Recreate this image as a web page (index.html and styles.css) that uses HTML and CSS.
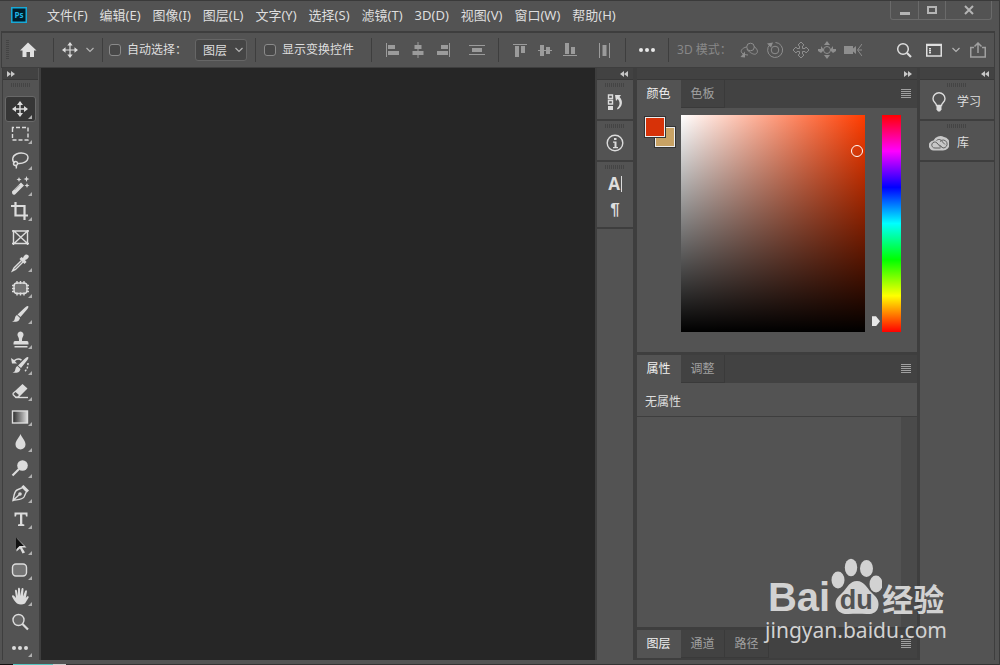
FILE: index.html
```html
<!DOCTYPE html>
<html lang="zh-CN">

<head>
    <meta charset="UTF-8">
    <meta name="viewport" content="width=device-width, initial-scale=1.0">
    <title>Photoshop</title>
    <link rel="stylesheet" href="styles.css">
</head>

<body>
    <div class="app">
        <header class="menubar">
            <svg class="logo" viewBox="0 0 16 16" role="img" aria-label="Ps">
                <rect x=".75" y=".75" width="14.5" height="14.5" fill="#001d2b" stroke="#17a9d8" stroke-width="1.5" />
                <text x="8" y="11" text-anchor="middle">Ps</text>
            </svg>
            <nav class="menus">
                <button>文件(F)</button>
                <button>编辑(E)</button>
                <button>图像(I)</button>
                <button>图层(L)</button>
                <button>文字(Y)</button>
                <button>选择(S)</button>
                <button>滤镜(T)</button>
                <button>3D(D)</button>
                <button>视图(V)</button>
                <button>窗口(W)</button>
                <button>帮助(H)</button>
            </nav>
            <div class="window-buttons">
                <button aria-label="最小化"><svg viewBox="0 0 12 12"><path d="M1 8h10v3H1z" fill="#b4b4b4" /></svg></button>
                <button aria-label="最大化"><svg viewBox="0 0 12 12"><path d="M2 3h8v6H2z" fill="none" stroke="#b4b4b4" stroke-width="2" /></svg></button>
                <button class="close" aria-label="关闭"><svg viewBox="0 0 12 12"><path d="M2 2l8 8M10 2L2 10" stroke="#b4b4b4" stroke-width="2" /></svg></button>
            </div>
        </header>

        <!-- Options bar -->
        <div class="options">
            <span class="grip-v"></span>
            <button class="home" aria-label="主页"><svg class="i18" viewBox="0 0 18 18"><path d="M9 1.500L1 9.500h2.500V16H7.500v-5h3.500v5h4V9.500H17.500z" fill="#e0e0e0" /></svg></button>
            <div class="group">
                <button aria-label="移动工具"><svg class="i16" viewBox="0 0 18 18"><path d="M9 2v14M2 9h14" stroke="#ddd" stroke-width="1.300" /><path d="M9 0l3 4H6zM9 18l3-4H6zM0 9l4-3v6zM18 9l-4-3v6z" fill="#ddd" /></svg></button>
                <svg class="chev" viewBox="0 0 8 8"><path d="M.5 2L4 5.500 7.500 2" /></svg>
            </div>
            <div class="group auto">
                <label class="check"><input type="checkbox">自动选择：</label>
                <span class="select">
                    <select aria-label="自动选择"><option>图层</option><option>组</option></select>
                    <svg class="chev" viewBox="0 0 8 8"><path d="M.5 2L4 5.500 7.500 2" /></svg>
                </span>
            </div>
            <div class="group transform">
                <label class="check"><input type="checkbox">显示变换控件</label>
            </div>
            <div class="group align">
                <button aria-label="左对齐"><svg class="i16" viewBox="0 0 16 16"><path d="M1 1h1v14H1zM3 3h7v4H3zM3 9h11v4H3z" /></svg></button>
                <button aria-label="水平居中对齐"><svg class="i16" viewBox="0 0 16 16"><path d="M7.500 0h1v16h-1zM4.500 3h7v4h-7zM2.500 9h11v4h-11z" /></svg></button>
                <button aria-label="右对齐"><svg class="i16" viewBox="0 0 16 16"><path d="M14 1h1v14h-1zM6 3h7v4H6zM2 9h11v4H2z" /></svg></button>
                <button class="distribute" aria-label="垂直分布"><svg class="i16" viewBox="0 0 16 16"><path d="M0 3h16v1H0zM0 12h16v1H0zM3 6h10v4H3z" /></svg></button>
            </div>
            <div class="group align">
                <button aria-label="顶对齐"><svg class="i16" viewBox="0 0 16 16"><path d="M1 2h14v1H1zM3 4h4v11H3zM9 4h4v7H9z" /></svg></button>
                <button aria-label="垂直居中对齐"><svg class="i16" viewBox="0 0 16 16"><path d="M1 8h14v1H1zM3 3h4v11H3zM9 5h4v7H9z" /></svg></button>
                <button aria-label="底对齐"><svg class="i16" viewBox="0 0 16 16"><path d="M1 13h14v1H1zM3 1h4v11H3zM9 5h4v7H9z" /></svg></button>
                <button class="distribute" aria-label="水平分布"><svg class="i16" viewBox="0 0 16 16"><path d="M3 1h1v15H3zM13 1h1v15h-1zM6.500 3h4v11h-4z" /></svg></button>
            </div>
            <div class="group more">
                <button aria-label="更多"><svg class="i18" viewBox="0 0 18 18"><g fill="#e8e8e8"><circle cx="3" cy="9" r="2" /><circle cx="9" cy="9" r="2" /><circle cx="15" cy="9" r="2" /></g></svg></button>
            </div>
            <div class="group mode">
                <span>3D 模式：</span>
                <button aria-label="旋转"><svg class="i18" viewBox="0 0 18 18"><circle cx="10.500" cy="6" r="3.800" /><path d="M6.500 6C2 7 0 10 2 12c1 1.200 3 1.800 6 2M14 5.500c3 2 4.500 5 2.500 7-1.500 1.500-4 .5-7-1.500L7 8.500" /><path class="solid" d="M5 10.500v6l-4.500-.5z" /></svg></button>
                <button aria-label="滚动"><svg class="i18" viewBox="0 0 18 18"><circle cx="9" cy="9" r="3.800" /><path d="M4 3.500A7.500 7.500 0 1 0 9.500 1.500" /><path class="solid" d="M1 2.500l6-1-2 5z" /></svg></button>
                <button aria-label="平移"><svg class="i18" viewBox="0 0 18 18"><path d="M9 1l3 3-1.500 1v2.500H13L14 6l3 3-3 3-1-1.500h-2.500V13l1.500 1-3 3-3-3 1.500-1v-2.500H5L4 12 1 9l3-3 1 1.500h2.500V5L6 4z" /></svg></button>
                <button aria-label="滑动"><svg class="i18" viewBox="0 0 18 18"><circle cx="9" cy="9" r="3.500" /><path class="solid" d="M9 0l3 4H6zM9 18l3-4H6zM0 8h3V5l3 4-3 3-3-2zM18 8h-3V5l-3 4 3 3 3-2z" /></svg></button>
                <button aria-label="缩放"><svg class="i18" viewBox="0 0 18 18"><path class="solid" d="M0 5h9v2.500l3-2.500v8L9 10.500V13H0z" /><path d="M18 3l-4.500 6 4.500 6M14 9h4" /></svg></button>
            </div>
            <div class="right-tools">
                <button class="search" aria-label="搜索"><svg class="i16" viewBox="0 0 16 16"><circle cx="7" cy="7" r="5.300" /><path d="M11 11l4 4" stroke-width="2.200" /></svg></button>
                <button aria-label="工作区"><svg class="i16" viewBox="0 0 16 16"><path d="M.75 2.500h14.500v11.500H.750z" /><path d="M1 3h14" stroke-width="2" /><path d="M4 6v6" stroke-width="2" stroke-dasharray="1.500 .5" /></svg></button>
                <svg class="chev" viewBox="0 0 8 8"><path d="M.5 2L4 5.500 7.500 2" /></svg>
                <button class="share" aria-label="共享"><svg class="i16" viewBox="0 0 16 16"><path d="M4 5.500H.750V15h14.500V5.500H12M8 11V1M4.500 4.500L8 1l3.500 3.500" /></svg></button>
            </div>
        </div>

        <div class="workspace">
            <aside class="toolbar">
                <button class="collapse left" aria-label="展开"><svg viewBox="0 0 8 6"><path d="M0 0l4 3-4 3zM4 0l4 3-4 3z" /></svg></button>
                <span class="grip"></span>
                <div class="tools">
                    <button class="active sub" aria-label="移动"><svg viewBox="0 0 20 20"><path class="l" d="M10 3v14M3 10h14" /><path d="M10 2l3 4H7zM10 18l3-4H7zM2 10l4-3v6zM18 10l-4-3v6z" /></svg></button>
                    <button class="sub" aria-label="矩形选框"><svg viewBox="0 0 20 20"><path class="l" stroke-dasharray="4 2" d="M2.500 6V3.500H18v12.500H2.500V5" /></svg></button>
                    <button class="sub" aria-label="套索"><svg viewBox="0 0 20 20"><path class="l" d="M5 13C1.500 11 2 6 6.500 4 11 2 18 3 18 7.500c0 4-5 6.500-10 6" /><circle class="l" cx="5.500" cy="13.500" r="2" /><path class="l" d="M5 15.500c1.500 0 2 1 1 3" /></svg></button>
                    <button class="sub" aria-label="魔棒"><svg viewBox="0 0 20 20"><path d="M2 15.500L11 6.500l3 3-9 9q-3 1-3-3zM9 1l.7 1.800L11.500 3.500 9.700 4.200 9 6l-.7-1.800L6.500 3.500l1.800-.7zM16.500 0l.8 2.200 2.200.8-2.200.8-.8 2.200-.8-2.200-2.200-.8 2.200-.8zM17 7l.7 1.800 1.800.7-1.800.7L17 12l-.7-1.800-1.800-.7 1.800-.7z" /><path d="M4.500 14l5-5" stroke="#999" /></svg></button>
                    <button class="sub" aria-label="裁剪"><svg viewBox="0 0 20 20"><path class="l w" d="M5.500 1v13.500H18M1 5h13.500v14" /></svg></button>
                    <button aria-label="图框"><svg viewBox="0 0 20 20"><path class="l" d="M2 4h17M2 16.500h17M3.500 3v15M17.500 3v15M4 4l13.500 12.500M17.500 4L4 16.500" /></svg></button>
                    <button class="sub" aria-label="吸管"><svg viewBox="0 0 20 20"><path d="M9.500 6L11.500 4l1.500 1c1-3 3-4.500 5-3s0 4-3 5l1.500 2-2 2z" /><path class="l" d="M11.500 7.500L4 15l-1.500 3 3-1.500L13 9" /></svg></button>
                    <button class="sub" aria-label="修补"><svg viewBox="0 0 20 20"><rect class="l" x="4" y="5" width="13" height="10.500" rx="3" fill="#747474" /><path class="l" d="M7 3v3M10.500 3v3M14 3v3M7 14.500v3M10.500 14.500v3M14 14.500v3M2 7.500h3M2 10.500h3M2 13.500h3M16 7.500h3M16 10.500h3M16 13.500h3" /></svg></button>
                    <button class="sub" aria-label="画笔"><svg viewBox="0 0 20 20"><path d="M18 2c1 .5 0 2-1 3.500L10.500 13 7.500 10.500 14.500 4Q17 1.500 18 2zM7 11l3 3c-1 4-4 4-8 3.800 2.500-1 2.500-2 3-4 .4-1.500 1-2.300 2-2.800z" /></svg></button>
                    <button class="sub" aria-label="仿制图章"><svg viewBox="0 0 20 20"><path d="M10.500 1.500a3.200 3.200 0 0 1 2.500 5c-1 1.500-1 3-1 4.500h5q1.500 0 1.500 2v1.500h-15V13q0-2 1.500-2h4c0-1.500 0-3-1-4.500a3.200 3.200 0 0 1 2.500-5zM4.500 16h13v1.500h-13z" /></svg></button>
                    <button class="sub" aria-label="历史记录画笔"><svg viewBox="0 0 20 20"><path d="M18 2c1 .5 0 2-1 3.500L11 13 8 10.500 14.500 4Q17 1.500 18 2zM7.500 11l3 3c-1 4-4 4-8 3.800 2.500-1 2.500-2 3-4 .4-1.500 1-2.300 2-2.800zM1 3l3 2q4-3 8-.5l-1 1.200q-3-2-6 .5L7 8.500H2z" /><path class="l" stroke-dasharray="2 1.500" d="M18 8c0 4-1 7-4 9" /></svg></button>
                    <button class="sub" aria-label="橡皮擦"><svg viewBox="0 0 20 20"><path d="M12.500 3l5 4.500-7 7-5-5zM2.500 12l3-2.500 5 5L8.500 17h-3l-3-3zM5.500 11l-2 2 2.500 2.500h1.500L9 14z" fill-rule="evenodd" /><path class="l" d="M5.500 16.500H18" /></svg></button>
                    <button class="sub" aria-label="渐变"><svg viewBox="0 0 20 20"><defs><linearGradient id="fade"><stop stop-color="#2a2a2a" /><stop offset="1" stop-color="#ddd" /></linearGradient></defs><rect class="l" x="2.500" y="4" width="15" height="12" fill="url(#fade)" /></svg></button>
                    <button class="sub" aria-label="模糊"><svg viewBox="0 0 20 20"><path d="M10.500 2c1.500 4 5 6.500 5 10.500a5 5 0 0 1-10 0C5.500 8.500 9 6 10.500 2z" /></svg></button>
                    <button class="sub" aria-label="减淡"><svg viewBox="0 0 20 20"><circle cx="12.500" cy="7.500" r="5.300" /><path class="l w" d="M9 11l-6.500 6.500" /></svg></button>
                    <button class="sub" aria-label="钢笔"><svg viewBox="0 0 20 20"><path class="l" d="M3 17.500C4 13 4 8.500 7 7l5.500-2.500 4 4L14 14c-1.500 2.500-6 2.500-11 3.500zM3 17.500l6.500-6" /><circle cx="10" cy="11" r="1.800" /><path d="M11.500 3.500L13.500 2 19 7.500l-2 2z" /></svg></button>
                    <button class="sub" aria-label="横排文字"><svg viewBox="0 0 20 20"><path d="M4.500 3.500h13v4H16l-.5-2h-3.200v9.500l2 .5v1.500H8V15.500l2-.5V5.500H6.500L6 7.500H4.500z" /></svg></button>
                    <button class="sub" aria-label="路径选择"><svg viewBox="0 0 20 20"><path d="M6.500 3l10 9.500h-4.500l3 5-2.500 1-2.500-5-3.500 3z" /><path d="M6 2.500l8 8.500H9.500L6 14.500z" fill="#111" /></svg></button>
                    <button class="sub" aria-label="圆角矩形"><svg viewBox="0 0 20 20"><rect class="l" x="2.500" y="4" width="14" height="12" rx="3.500" fill="#747474" /></svg></button>
                    <button class="sub" aria-label="抓手"><svg viewBox="0 0 20 20"><path d="M7 17.500C5 15.500 3 13 2 10.500c0-1.500 1.500-1.500 2.500-.2L6 12 5 5c0-1.700 1.700-1.700 2 0l1 5V3c0-1.600 1.800-1.600 2 0l.3 7L11.500 3c.3-1.600 2-1.400 2 .2L13 10.500l2-5.300c.6-1.400 2.200-.9 1.900.6L15.800 12l1.200-1.500c1-.9 2.200 0 1.500 1.200L15 17.500q-4 2-8 0z" /></svg></button>
                    <button aria-label="缩放"><svg viewBox="0 0 20 20"><circle class="l" cx="8.500" cy="8" r="5.500" fill="#666" /><path class="l w" d="M12.500 12l5.500 5.500" /></svg></button>
                    <button class="sub" aria-label="编辑工具栏"><svg viewBox="0 0 20 20"><circle cx="4" cy="11" r="2" /><circle cx="10" cy="11" r="2" /><circle cx="16" cy="11" r="2" /></svg></button>
                </div>
            </aside>

            <main class="canvas"></main>

            <!-- Collapsed icon panels -->
            <aside class="dock">
                <button class="collapse middle" aria-label="展开面板"><svg viewBox="0 0 8 6"><path d="M4 0L0 3l4 3zM8 0L4 3l4 3z" /></svg></button>
                <div class="dock-group">
                    <span class="grip"></span>
                    <button aria-label="历史记录"><svg viewBox="0 0 20 20"><path class="l" d="M3.500 3h4v3.500h-4zM3.500 8.500h4V12h-4z" /><path d="M3 14h5v4H3zM10 3h6l-1.500 2c4 4 3 10-2 12.500l-.5-1c3-3 3.500-6 .8-9.500L11 9z" /></svg></button>
                </div>
                <div class="dock-group">
                    <span class="grip"></span>
                    <button aria-label="信息"><svg viewBox="0 0 20 20"><circle class="l" cx="10" cy="10" r="7.800" /><path d="M9 5h2.500v2H9zM8 8.500h3.500V14H13v1.200H8V14h1.500V9.800H8z" /></svg></button>
                </div>
                <div class="dock-group">
                    <span class="grip"></span>
                    <button class="char" aria-label="字符">A<i></i></button>
                    <button aria-label="段落" class="para">¶</button>
                </div>
            </aside>

            <section class="panels">
                <button class="collapse right" aria-label="折叠面板"><svg viewBox="0 0 8 6"><path d="M0 0l4 3-4 3zM4 0l4 3-4 3z" /></svg></button>
                <div class="panel">
                    <div class="tabs">
                        <button class="tab selected">颜色</button>
                        <button class="tab">色板</button>
                        <button class="panel-menu" aria-label="面板菜单"></button>
                    </div>
                    <div class="color-body">
                        <div class="swatches">
                            <button class="bg" aria-label="背景色"></button>
                            <button class="fg" aria-label="前景色"></button>
                        </div>
                        <div class="field"><span class="picker"></span></div>
                        <input class="hue" type="range" min="0" max="360" value="10" aria-label="色相">
                    </div>
                </div>
                <div class="panel props">
                    <div class="tabs">
                        <button class="tab selected">属性</button>
                        <button class="tab">调整</button>
                        <button class="panel-menu" aria-label="面板菜单"></button>
                    </div>
                    <p class="empty">无属性</p>
                    <div class="scroll-area"><span class="scrollbar"></span></div>
                </div>
                <div class="panel layers">
                    <div class="tabs">
                        <button class="tab selected">图层</button>
                        <button class="tab">通道</button>
                        <button class="tab">路径</button>
                        <button class="panel-menu" aria-label="面板菜单"></button>
                    </div>
                </div>
            </section>

            <aside class="dock wide">
                <button class="collapse right" aria-label="折叠面板"><svg viewBox="0 0 8 6"><path d="M4 0L0 3l4 3zM8 0L4 3l4 3z" /></svg></button>
                <div class="dock-group">
                    <span class="grip"></span>
                    <button><svg viewBox="0 0 20 20"><path class="l" d="M7.500 13.500C7.500 11 4 10.500 4 6.800a6 6 0 0 1 12 0c0 3.700-3.500 4.200-3.500 6.700z" /><path d="M7.500 14h5v3.500L11 19.500H9l-1.500-2z" /></svg>学习</button>
                </div>
                <div class="dock-group">
                    <span class="grip"></span>
                    <button><svg viewBox="0 0 20 20"><path d="M5 17.500A5 5 0 0 1 4.500 7.500 7.500 7.500 0 0 1 15 4a6.800 6.800 0 0 1-1 13.500z" fill="#c8c8c8" /><path d="M11.500 15H6a3 3 0 1 1 2-5l4 4.500M7.500 7.500c2.500-2 4.500-1 6 1.500l2.500 2.500M11 8.500a4 4 0 1 1 3 6.500l-3.500-3" fill="none" stroke="#606060" /></svg>库</button>
                </div>
            </aside>
        </div>
        <footer class="edge"></footer>

        <div class="watermark">
            <div class="brand">
                <span class="bai">Bai</span>
                <span class="paw">
                    <svg viewBox="0 0 52 58"><g fill="#d2d2d2"><ellipse cx="8" cy="22" rx="6.500" ry="8.500" /><ellipse cx="21" cy="9.500" rx="6.200" ry="8.800" /><ellipse cx="36.500" cy="10.500" rx="6.500" ry="8.500" /><ellipse cx="46" cy="26" rx="6.500" ry="8.500" /><path d="M27 23c7 0 10 7 14 11s8 7 7.500 13c-.5 8-7 9.500-12 9-6-.5-12-.5-18 0-7 .5-13-3-13-10 0-6 4-8 8-12.500C17.500 29 20 23 27 23z" /></g></svg>
                    <b>du</b>
                </span>
                <span class="jy">经验</span>
            </div>
            <div class="site">jingyan.baidu.com</div>
        </div>
    </div>
</body>

</html>
```
FILE: styles.css
```css
/* Global styles */
* {
    box-sizing: border-box;
}

body {
    margin: 0;
    background-color: #535353;
    color: #dedede;
    font-family: "Noto Sans", "Noto Sans CJK SC", sans-serif;
    font-size: 12px;
    line-height: 16px;
}

button {
    margin: 0;
    padding: 0;
    border: none;
    background: none;
    color: inherit;
    font: inherit;
    display: flex;
    align-items: center;
    justify-content: center;
}

svg {
    display: block;
    flex: none;
}

.app {
    position: relative;
    display: flex;
    flex-direction: column;
    min-height: 100vh;
    border-top: 1px solid #3a3a3a;
    border-right: 1px solid #3a3a3a;
}

.i16 {
    width: 16px;
    height: 16px;
}

.i18 {
    width: 18px;
    height: 18px;
}

.chev {
    width: 8px;
    height: 8px;
    fill: none;
    stroke: #b4b4b4;
    stroke-width: 1.2;
}

/* Menu bar */
.menubar {
    display: flex;
    align-items: center;
    height: 30px;
    padding: 0 7px 2px 11px;
}

.logo {
    width: 16px;
    height: 16px;
}

.logo text {
    fill: #22b5e5;
    font: bold 8px "Open Sans", sans-serif;
}

.menus {
    display: flex;
    gap: 12px;
    margin-left: 20px;
    font-size: 13px;
    white-space: nowrap;
}

.window-buttons {
    display: flex;
    align-self: flex-start;
    margin-left: auto;
    border: 1px solid #6a6a6a;
    border-top: none;
    border-radius: 0 0 3px 3px;
}

.window-buttons button {
    width: 27px;
    height: 18px;
}

.window-buttons button + button {
    border-left: 1px solid #6a6a6a;
}

.window-buttons .close {
    width: 46px;
}

.window-buttons svg {
    width: 12px;
    height: 12px;
}

/* Options bar */
.options {
    display: flex;
    align-items: center;
    height: 37px;
    margin: 0 4px 0 1px;
    padding-left: 4px;
    border: 1px solid #3e3e3e;
    border-top-width: 2px;
    white-space: nowrap;
}

.grip-v {
    width: 3px;
    height: 20px;
    background: repeating-linear-gradient(#444 0 1px, #535353 1px 2px);
}

.home {
    width: 44px;
    padding-right: 6px;
}

.group {
    display: flex;
    align-items: center;
    gap: 8px;
    height: 24px;
    padding: 0 8px;
    border-left: 1px solid #3e3e3e;
}

.auto {
    padding-left: 6px;
}

.transform {
    padding-right: 17px;
}

.check {
    display: flex;
    align-items: center;
    gap: 6px;
    line-height: 18px;
}

.check input {
    appearance: none;
    width: 12px;
    height: 12px;
    margin: 0;
    border: 1px solid #8a8a8a;
    border-radius: 3px;
    background-color: #484848;
}

.select {
    display: grid;
    align-items: center;
    width: 52px;
}

.select select,
.select .chev {
    grid-area: 1 / 1;
}

.select select {
    appearance: none;
    width: 100%;
    height: 22px;
    padding: 1px 7px 0;
    border: 1px solid #666;
    border-radius: 3px;
    background-color: #454545;
    color: inherit;
    font: inherit;
}

.select .chev {
    justify-self: end;
    margin-right: 4px;
    pointer-events: none;
}

.align {
    gap: 9px;
    padding: 0 13px;
    fill: #9b9b9b;
}

.align .distribute {
    margin-left: 9px;
}

.more {
    padding: 0 12px;
}

.mode {
    color: #888;
    fill: none;
    stroke: #8e8e8e;
}

.mode .solid {
    fill: #8e8e8e;
    stroke: none;
}

.right-tools {
    display: flex;
    align-items: center;
    gap: 10px;
    margin-left: auto;
    padding-right: 8px;
    fill: none;
    stroke: #dedede;
    stroke-width: 1.5;
}

.search {
    margin-right: 4px;
}

.share {
    stroke: #a0a0a0;
}

/* Workspace */
.workspace {
    display: flex;
    flex: 1;
    margin: 0 4px 0 2px;
    background-color: #3e3e3e;
}

.collapse {
    height: 12px;
    padding: 0 8px;
    border-bottom: 1px solid #383838;
    background-color: #424242;
}

.collapse.left {
    justify-content: flex-start;
    padding: 0 4px;
}

.collapse.right {
    justify-content: flex-end;
    padding: 0 5px;
}

.collapse.middle {
    justify-content: flex-end;
    padding: 0 5px;
}

.collapse svg {
    width: 8px;
    height: 6px;
    fill: #c8c8c8;
}

.grip {
    align-self: center;
    width: 20px;
    height: 4px;
    background: repeating-linear-gradient(90deg, #444 0 1px, #535353 1px 2px);
}

.toolbar {
    display: flex;
    flex-direction: column;
    width: 39px;
    padding-right: 1px;
    border-left: 1px solid #3e3e3e;
    background: #535353;
    border-right: 2px solid #3e3e3e;
}

.toolbar .grip {
    margin: 3px 0 9px;
}

.tools {
    display: flex;
    flex-direction: column;
    flex: 1;
}

.tools button {
    position: relative;
    flex: 1;
    width: 31px;
    margin-left: 2px;
    border: 1px solid transparent;
    border-radius: 3px;
}

.tools svg {
    margin-right: 2px;
}

.tools .active {
    border-color: #686868;
    background-color: #363636;
}

.tools .sub::after {
    content: "";
    position: absolute;
    right: 3px;
    bottom: 2px;
    border-left: 4px solid transparent;
    border-bottom: 4px solid #b0b0b0;
}

.tools svg,
.dock-group svg {
    width: 20px;
    height: 20px;
    fill: #dcdcdc;
}

.l {
    stroke: #dcdcdc;
    stroke-width: 1.4;
}

.w {
    stroke-width: 2.2;
}

path.l,
circle.l:not([fill]) {
    fill: none;
}

.canvas {
    flex: 1;
    background-color: #262626;
}

.dock {
    display: flex;
    flex-direction: column;
    width: 40px;
    border: 0 solid #3e3e3e;
    border-width: 0 2px;
    background-color: #535353;
}

.dock-group {
    display: flex;
    flex-direction: column;
    align-items: center;
    padding: 3px 0 4px;
    border-bottom: 2px solid #3e3e3e;
}

.dock-group button {
    height: 26px;
}

.dock-group .char {
    font: bold 17px/20px "Open Sans", sans-serif;
}

.char i {
    width: 1px;
    height: 16px;
    margin-left: 1px;
    background-color: #dcdcdc;
}

.dock-group .para {
    font: bold 17px/20px "Liberation Sans", sans-serif;
}

.dock-group .grip {
    margin-bottom: 2px;
}

.dock.wide {
    width: 77px;
    border-width: 0 1px 0 2px;
}

.wide .dock-group button {
    align-self: flex-start;
    gap: 8px;
    margin-left: 9px;
}

/* Panels */
.panels {
    display: flex;
    flex-direction: column;
    width: 283px;
    padding: 0 1px 0 2px;
}

.panel {
    margin-bottom: 3px;
    background-color: #535353;
}

.tabs {
    display: flex;
    height: 28px;
    background-color: #424242;
}

.tab {
    width: 44px;
    border: 1px solid #3a3a3a;
    border-width: 0 1px 1px 0;
    color: #a0a0a0;
}

.tab.selected {
    border-color: #535353;
    background-color: #535353;
    color: #f0f0f0;
}

.panel-menu {
    align-self: center;
    width: 10px;
    height: 9px;
    margin: 0 6px 2px auto;
    background: repeating-linear-gradient(#a0a0a0 0 1px, #424242 1px 2px);
}

.color-body {
    display: flex;
    align-items: flex-start;
    padding: 7px 16px 20px 8px;
}

.swatches {
    display: grid;
    grid-template-columns: 10px 10px 10px;
    grid-template-rows: 10px 10px 10px;
    width: 36px;
    padding-top: 2px;
}

.swatches button {
    border: 1px solid #eee;
    outline: 1px solid #333;
}

.swatches .fg {
    grid-area: 1 / 1 / 3 / 3;
    background-color: #d73208;
}

.swatches .bg {
    grid-area: 2 / 2 / 4 / 4;
    background-color: #c8a264;
}

.field {
    position: relative;
    flex: 1;
    height: 217px;
    background: linear-gradient(to top, #000, transparent), linear-gradient(to right, #fff, #ff3c00);
}

.picker {
    position: absolute;
    top: 30px;
    right: 2px;
    width: 12px;
    height: 12px;
    border: 1px solid #fff;
    border-radius: 50%;
}

.hue {
    appearance: none;
    width: 29px;
    height: 217px;
    margin: 0 0 0 7px;
    writing-mode: vertical-lr;
    direction: rtl;
    background: linear-gradient(#f00, #f0f, #00f, #0ff, #0f0, #ff0, #f00) right / 19px 100% no-repeat;
}

.hue::-webkit-slider-thumb {
    appearance: none;
    width: 8px;
    height: 10px;
    margin-right: 21px;
    background-color: #e8e8e8;
    clip-path: polygon(0 0, 50% 0, 100% 50%, 50% 100%, 0 100%);
}

.props {
    display: flex;
    flex: 1;
    flex-direction: column;
}

.layers {
    margin-bottom: 2px;
}

.empty {
    margin: 0;
    padding: 11px 8px 6px;
    border-bottom: 1px solid #3e3e3e;
}

.scroll-area {
    display: flex;
    flex: 1;
    justify-content: flex-end;
}

.scrollbar {
    width: 16px;
    background-color: #4a4a4a;
}

.edge {
    height: 5px;
    background: linear-gradient(90deg, #111 13px, #55c5c0 13px 53px, #ccc 53px 66px, #333 66px) bottom / 100% 1px no-repeat;
}

/* Watermark */
.watermark {
    position: absolute;
    right: 52px;
    bottom: 21px;
    color: #d2d2d2;
    pointer-events: none;
}

.brand {
    display: flex;
    align-items: flex-end;
    justify-content: center;
    height: 58px;
}

.bai {
    font: bold 40px/38px "Liberation Sans", sans-serif;
}

.paw {
    display: grid;
    justify-items: center;
    align-items: end;
    width: 52px;
}

.paw svg,
.paw b {
    grid-area: 1 / 1;
}

.paw svg {
    width: 52px;
    height: 58px;
}

.paw b {
    color: #535353;
    font: bold 27px/32px "Liberation Sans", sans-serif;
}

.jy {
    font: bold 31px/36px "Noto Sans CJK SC", sans-serif;
}

.site {
    font: 21px/28px "Noto Sans", sans-serif;
}
```
